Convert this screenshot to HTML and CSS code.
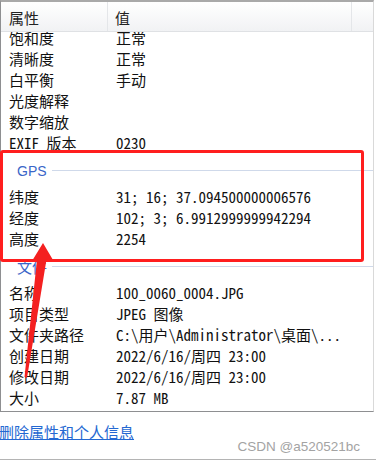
FILE: index.html
```html
<!DOCTYPE html>
<html lang="zh-CN">
<head>
  <meta charset="UTF-8" />
  <meta name="viewport" content="width=device-width, initial-scale=1.0"/>
  <title>属性</title>
  <link rel="stylesheet" href="styles.css">
</head>
<body>

<div class="list">
  <div class="list-head">
    <div class="col-name">属性</div>
    <div class="col-value">值</div>
    <div class="col-fill"></div>
  </div>
  <div class="list-body">
    <div class="rows">
      <div class="row"><span class="name">饱和度</span><span class="value">正常</span></div>
      <div class="row"><span class="name">清晰度</span><span class="value">正常</span></div>
      <div class="row"><span class="name">白平衡</span><span class="value">手动</span></div>
      <div class="row"><span class="name">光度解释</span><span class="value"></span></div>
      <div class="row"><span class="name">数字缩放</span><span class="value"></span></div>
      <div class="row"><span class="name">EXIF 版本</span><span class="value">0230</span></div>

      <div class="group"><span class="group-title">GPS</span><span class="group-line"></span></div>
      <div class="row"><span class="name">纬度</span><span class="value">31; 16; 37.094500000006576</span></div>
      <div class="row"><span class="name">经度</span><span class="value">102; 3; 6.9912999999942294</span></div>
      <div class="row"><span class="name">高度</span><span class="value">2254</span></div>

      <div class="group"><span class="group-title cn">文件</span><span class="group-line"></span></div>
      <div class="row"><span class="name">名称</span><span class="value">100_0060_0004.JPG</span></div>
      <div class="row"><span class="name">项目类型</span><span class="value">JPEG 图像</span></div>
      <div class="row"><span class="name">文件夹路径</span><span class="value">C:\用户\Administrator\桌面\...</span></div>
      <div class="row"><span class="name">创建日期</span><span class="value">2022/6/16/周四 23:00</span></div>
      <div class="row"><span class="name">修改日期</span><span class="value">2022/6/16/周四 23:00</span></div>
      <div class="row"><span class="name">大小</span><span class="value">7.87 MB</span></div>
    </div>
  </div>
</div>

<div class="footer">
  <a class="remove-link" href="#">删除属性和个人信息</a>
</div>

<div class="watermark">CSDN @a520521bc</div>

<!-- 标注 -->
<div class="mark-box"></div>
<svg class="mark-arrow" width="376" height="461" viewBox="0 0 376 461">
  <polygon points="43,243 53,260 46.5,259.5 27,378 24.5,377 37,259.5 32,261" fill="#f42020"/>
</svg>

</body>
</html>
```

FILE: styles.css
```css
body {
  margin: 0;
  width: 376px;
  height: 461px;
  position: relative;
  overflow: hidden;
  background: #fff;
  font-family: "Noto Sans Mono CJK SC", "Noto Sans CJK SC", monospace;
  font-size: 15px;
  color: #111;
}
.list {
  width: 374px;
  border-top: 2px solid #a9a9a9;
  border-left: 1px solid #8e8f91;
  border-right: 1px solid #d9d9d9;
  border-bottom: 1px solid #8e8f91;
  box-sizing: border-box;
  width: 374px;
}
.list-head {
  display: flex;
  height: 29px;
  border-bottom: 1px solid #dfe1e4;
  background: linear-gradient(#ffffff, #f1f2f4);
  font-family: "Noto Sans CJK SC", sans-serif;
  color: #222;
  line-height: 31px;
}
.col-name {
  width: 107px;
  padding-left: 8px;
  box-sizing: border-box;
  border-right: 1px solid #e4e6e9;
}
.col-value {
  width: 244px;
  padding-left: 7px;
  box-sizing: border-box;
  border-right: 1px solid #e4e6e9;
}
.col-fill {
  flex: 1;
}
.list-body {
  height: 379px;
  overflow: hidden;
}
.rows {
  margin-top: -5px;
}
.row {
  display: flex;
  height: 21px;
  line-height: 21px;
  white-space: nowrap;
}
.name {
  width: 108px;
  padding-left: 8px;
  box-sizing: border-box;
}
.value {
  padding-left: 7px;
}
.group {
  display: flex;
  align-items: center;
  height: 33px;
  padding-top: 2px;
  box-sizing: border-box;
  padding-left: 16px;
}
.group-title {
  font-family: "Liberation Sans", sans-serif;
  font-size: 14px;
  color: #3a66c8;
  margin-right: 5px;
}
.group-title.cn {
  font-family: "Noto Sans CJK SC", sans-serif;
  font-size: 15px;
}
.group-line {
  flex: 1;
  height: 1px;
  background: #cfd9ea;
}
.footer {
  height: 47px;
  border-bottom: 1px solid #b4b4b4;
  box-sizing: content-box;
  padding-top: 0;
}
.remove-link {
  display: inline-block;
  margin-top: 10px;
  margin-left: -1px;
  font-family: "Noto Sans CJK SC", sans-serif;
  font-size: 15px;
  line-height: 20px;
  color: #2468d2;
  text-decoration: underline;
}
.watermark {
  position: absolute;
  right: 16px;
  top: 438px;
  font-family: "Liberation Sans", sans-serif;
  font-size: 13.5px;
  line-height: 18px;
  color: #a3a3a3;
}
.mark-box {
  position: absolute;
  left: 0;
  top: 150px;
  width: 364px;
  height: 112px;
  border: 3px solid #ff1e1e;
  border-radius: 3px;
  box-sizing: border-box;
}
.mark-arrow {
  position: absolute;
  left: 0;
  top: 0;
}
```
